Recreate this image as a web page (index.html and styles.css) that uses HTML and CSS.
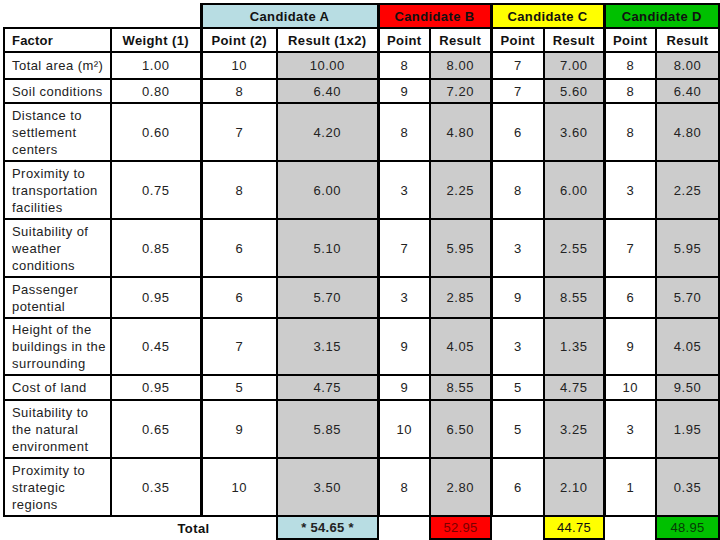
FILE: index.html
```html
<!DOCTYPE html>
<html>
<head>
<meta charset="utf-8">
<link rel="stylesheet" href="styles.css">
</head>
<body>
<table class="grid">
  <colgroup>
    <col class="c-factor"><col class="c-weight"><col class="c-ap"><col class="c-ar">
    <col class="c-bp"><col class="c-br"><col class="c-cp"><col class="c-cr">
    <col class="c-dp"><col class="c-dr">
  </colgroup>
  <tr class="r-cand">
    <td class="blank" colspan="2"></td>
    <th class="cand cand-a g" colspan="2">Candidate A</th>
    <th class="cand cand-b g" colspan="2">Candidate B</th>
    <th class="cand cand-c g" colspan="2">Candidate C</th>
    <th class="cand cand-d g" colspan="2">Candidate D</th>
  </tr>
  <tr class="r-head">
    <th class="factor">Factor</th>
    <th>Weight (1)</th>
    <th class="g">Point (2)</th>
    <th>Result (1x2)</th>
    <th class="g">Point</th>
    <th>Result</th>
    <th class="g">Point</th>
    <th>Result</th>
    <th class="g">Point</th>
    <th>Result</th>
  </tr>
  <tr class="h27">
    <td class="factor">Total area (m²)</td><td>1.00</td>
    <td class="g">10</td><td class="res">10.00</td>
    <td class="g">8</td><td class="res">8.00</td>
    <td class="g">7</td><td class="res">7.00</td>
    <td class="g">8</td><td class="res">8.00</td>
  </tr>
  <tr class="h24">
    <td class="factor">Soil conditions</td><td>0.80</td>
    <td class="g">8</td><td class="res">6.40</td>
    <td class="g">9</td><td class="res">7.20</td>
    <td class="g">7</td><td class="res">5.60</td>
    <td class="g">8</td><td class="res">6.40</td>
  </tr>
  <tr class="h58">
    <td class="factor">Distance to settlement centers</td><td>0.60</td>
    <td class="g">7</td><td class="res">4.20</td>
    <td class="g">8</td><td class="res">4.80</td>
    <td class="g">6</td><td class="res">3.60</td>
    <td class="g">8</td><td class="res">4.80</td>
  </tr>
  <tr class="h58">
    <td class="factor">Proximity to transportation facilities</td><td>0.75</td>
    <td class="g">8</td><td class="res">6.00</td>
    <td class="g">3</td><td class="res">2.25</td>
    <td class="g">8</td><td class="res">6.00</td>
    <td class="g">3</td><td class="res">2.25</td>
  </tr>
  <tr class="h58">
    <td class="factor">Suitability of weather conditions</td><td>0.85</td>
    <td class="g">6</td><td class="res">5.10</td>
    <td class="g">7</td><td class="res">5.95</td>
    <td class="g">3</td><td class="res">2.55</td>
    <td class="g">7</td><td class="res">5.95</td>
  </tr>
  <tr class="h41">
    <td class="factor">Passenger potential</td><td>0.95</td>
    <td class="g">6</td><td class="res">5.70</td>
    <td class="g">3</td><td class="res">2.85</td>
    <td class="g">9</td><td class="res">8.55</td>
    <td class="g">6</td><td class="res">5.70</td>
  </tr>
  <tr class="h57">
    <td class="factor">Height of the buildings in the surrounding</td><td>0.45</td>
    <td class="g">7</td><td class="res">3.15</td>
    <td class="g">9</td><td class="res">4.05</td>
    <td class="g">3</td><td class="res">1.35</td>
    <td class="g">9</td><td class="res">4.05</td>
  </tr>
  <tr class="h25">
    <td class="factor">Cost of land</td><td>0.95</td>
    <td class="g">5</td><td class="res">4.75</td>
    <td class="g">9</td><td class="res">8.55</td>
    <td class="g">5</td><td class="res">4.75</td>
    <td class="g">10</td><td class="res">9.50</td>
  </tr>
  <tr class="h58">
    <td class="factor">Suitability to the natural environment</td><td>0.65</td>
    <td class="g">9</td><td class="res">5.85</td>
    <td class="g">10</td><td class="res">6.50</td>
    <td class="g">5</td><td class="res">3.25</td>
    <td class="g">3</td><td class="res">1.95</td>
  </tr>
  <tr class="h58">
    <td class="factor">Proximity to strategic regions</td><td>0.35</td>
    <td class="g">10</td><td class="res">3.50</td>
    <td class="g">8</td><td class="res">2.80</td>
    <td class="g">6</td><td class="res">2.10</td>
    <td class="g">1</td><td class="res">0.35</td>
  </tr>
  <tr class="r-total">
    <td class="none"></td>
    <td class="none total-label" colspan="2">Total</td>
    <td class="tot tot-a">* 54.65 *</td>
    <td class="none"></td>
    <td class="tot tot-b">52.95</td>
    <td class="none"></td>
    <td class="tot tot-c">44.75</td>
    <td class="none"></td>
    <td class="tot tot-d">48.95</td>
  </tr>
</table>
</body>
</html>
```
FILE: styles.css
```css
html, body {
  margin: 0;
  padding: 0;
  background: #ffffff;
}
body {
  padding: 3px 0 0 3px;
  font-family: "Liberation Sans", Arial, sans-serif;
  font-size: 13px;
  color: #1a1a1a;
}
.grid {
  border-collapse: collapse;
  table-layout: fixed;
  width: 716px;
}
.c-factor { width: 107px; }
.c-weight { width: 90px; }
.c-ap { width: 76px; }
.c-ar { width: 101px; }
.c-bp { width: 52px; }
.c-br { width: 61px; }
.c-cp { width: 53px; }
.c-cr { width: 60px; }
.c-dp { width: 52px; }
.c-dr { width: 63px; }

.grid td, .grid th {
  border: 2px solid #000;
  padding: 0;
  text-align: center;
  vertical-align: middle;
  line-height: 17px;
  overflow: hidden;
}
.grid td {
  letter-spacing: 0.5px;
  color: #222;
}
.grid th {
  font-weight: bold;
  letter-spacing: 0.4px;
  color: #111;
}
.grid .g { border-left-width: 3px; }
.grid td.factor, .grid th.factor {
  text-align: left;
  padding-left: 7px;
  padding-right: 4px;
}
.grid th.factor { letter-spacing: 0.2px; }
.grid td.factor { letter-spacing: 0.45px; }
.grid .blank, .grid .none {
  border-style: none;
}
.r-cand { height: 24px; }
.r-head { height: 24px; }
.h27 { height: 27px; }
.h24 { height: 24px; }
.h25 { height: 25px; }
.h41 { height: 41px; }
.h57 { height: 57px; }
.h58 { height: 58px; }
.r-total { height: 23px; }

.cand { letter-spacing: 0.5px; }
.cand-a { background: #b8dde3; color: #111; }
.cand-b { background: #ff0000; color: #7a0000; }
.cand-c { background: #ffff00; color: #111; }
.cand-d { background: #00c000; color: #063a06; }

.res { background: #cccccc; }

.grid td.total-label {
  font-weight: bold;
  letter-spacing: 0.4px;
  color: #111;
}
.grid td.tot {
  border: 2px solid #000;
  letter-spacing: 0.3px;
}
.tot-a { background: #b8dde3; font-weight: bold; }
.grid td.tot-b { background: #ff0000; color: #7a0000; }
.grid td.tot-c { background: #ffff00; color: #111; }
.grid td.tot-d { background: #00c000; color: #063a06; }
```
